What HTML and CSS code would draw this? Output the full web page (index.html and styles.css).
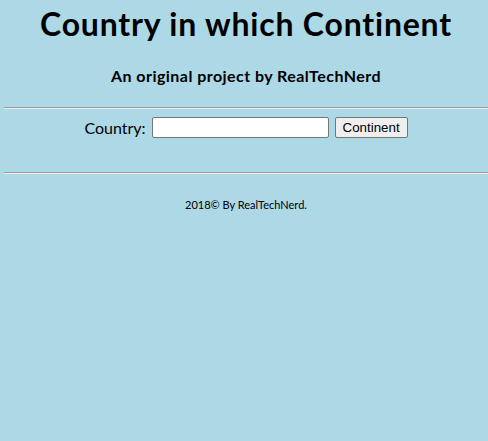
FILE: index.html
```html
<!DOCTYPE html>
<html lang="en">
<head>
<meta charset="utf-8">
<title>Country in which Continent</title>
<link rel="stylesheet" href="styles.css">
</head>
<body>
<header class="head">
  <h1 class="title">Country in which Continent</h1>
  <h4 class="subtitle">An original project by RealTechNerd</h4>
</header>
<hr class="rule">
<form class="lookup">
  <label class="label" for="country">Country:</label>
  <input class="field" id="country" type="text">
  <button class="btn" type="button">Continent</button>
</form>
<hr class="rule rule-bottom">
<footer class="foot">2018© By RealTechNerd.</footer>
</body>
</html>
```
FILE: styles.css
```css
html {
  background: #add8e6;
  overflow: hidden;
}
body {
  margin: 0 0 0 4px;
  width: 484px;
  font-family: Lato, "Open Sans", sans-serif;
  color: #000;
  text-align: center;
}
.head {
  padding-top: 4px;
}
.title {
  margin: 0;
  font-size: 32px;
  line-height: 40px;
  font-weight: bold;
  letter-spacing: 0.8px;
}
.subtitle {
  margin: 22px 0 0;
  font-size: 16px;
  line-height: 20px;
  font-weight: bold;
  letter-spacing: 0.45px;
}
.rule {
  margin: 21px 0 0;
  border: 0;
  border-top: 1px solid #9a9a9a;
  border-bottom: 1px solid #eeeeee;
  height: 0;
}
.lookup {
  margin: 8px 0 0;
  display: flex;
  justify-content: center;
  align-items: center;
  gap: 6px;
  height: 21px;
}
.label {
  font-size: 16px;
}
.field {
  box-sizing: border-box;
  width: 177px;
  height: 21px;
  margin: 0;
  border: 1px solid #767676;
  border-radius: 2px;
  background: #fff;
  padding: 1px 2px;
}
.btn {
  box-sizing: border-box;
  width: 73px;
  height: 21px;
  margin: 0;
  padding: 0 6px;
  border: 1px solid #767676;
  border-radius: 2px;
  background: #efefef;
  font-family: "Liberation Sans", Arial, sans-serif;
  font-size: 13.33px;
  color: #000;
}
.rule-bottom {
  margin-top: 34px;
}
.foot {
  margin-top: 24px;
  font-size: 11px;
  line-height: 14px;
}
```
